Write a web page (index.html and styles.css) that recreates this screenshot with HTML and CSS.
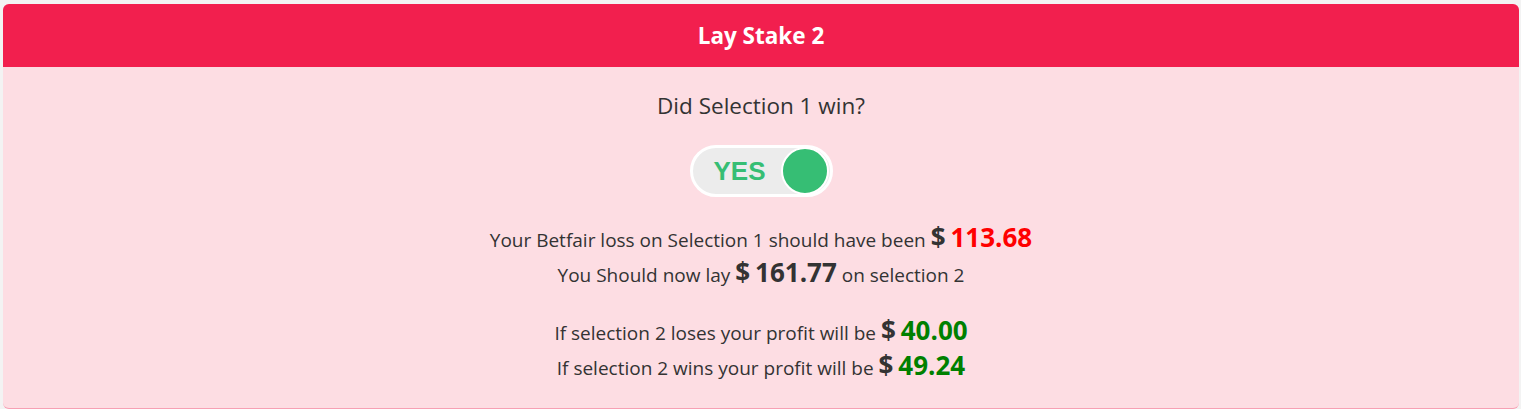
FILE: index.html
```html
<!DOCTYPE html>
<html>
<head>
<meta charset="utf-8">
<link rel="stylesheet" href="styles.css">
</head>
<body>
<div class="card">
  <div class="card-header">Lay Stake 2</div>
  <div class="card-body">
    <div class="question">Did Selection 1 win?</div>
    <div class="toggle">
      <span class="toggle-label">YES</span>
      <span class="toggle-knob"></span>
    </div>
    <div class="results">
      <p class="line">Your Betfair loss on Selection 1 should have been <b class="cur">$</b> <b class="amt red">113.68</b></p>
      <p class="line">You Should now lay <b class="cur">$</b> <b class="amt dark">161.77</b> on selection 2</p>
    </div>
    <div class="results profits">
      <p class="line">If selection 2 loses your profit will be <b class="cur">$</b> <b class="amt green">40.00</b></p>
      <p class="line">If selection 2 wins your profit will be <b class="cur">$</b> <b class="amt green">49.24</b></p>
    </div>
  </div>
</div>
</body>
</html>
```

FILE: styles.css
```css
html, body {
  margin: 0;
  padding: 0;
  background: #f3f3f3;
}
body {
  padding: 4px 2px 0 3px;
  font-family: "Open Sans", "Liberation Sans", sans-serif;
  color: #333;
}
.card {
  border-radius: 6px;
  overflow: hidden;
  background: #fddde3;
  border-bottom: 1px solid #f7a0b4;
}
.card-header {
  background: #f21f4e;
  color: #fff;
  font-weight: 700;
  font-size: 22.5px;
  height: 63px;
  display: flex;
  align-items: center;
  justify-content: center;
}
.card-body {
  display: flex;
  flex-direction: column;
  align-items: center;
  padding: 24px 0 22px;
}
.question {
  font-size: 22.5px;
  line-height: 30px;
}
.toggle {
  margin-top: 24px;
  width: 143px;
  height: 52px;
  box-sizing: border-box;
  border: 3px solid #fff;
  border-radius: 26px;
  background: #ececec;
  display: flex;
  align-items: center;
  justify-content: space-between;
  padding: 0 1px 0 21px;
}
.toggle-label {
  font-family: "Liberation Sans", Arial, sans-serif;
  font-weight: 700;
  font-size: 26px;
  color: #36be74;
}
.toggle-knob {
  width: 48px;
  height: 48px;
  border-radius: 50%;
  background: #36be74;
  border: 2px solid #fff;
  box-sizing: border-box;
}
.results {
  margin-top: 26px;
  text-align: center;
}
.profits {
  margin-top: 23px;
}
.line {
  margin: 0;
  font-size: 19px;
  line-height: 35px;
}
.cur, .amt {
  font-size: 26px;
  font-weight: 700;
  line-height: 1;
}
.cur { color: #333; }
.red { color: #ff0000; }
.dark { color: #333; }
.green { color: #008000; }
```
